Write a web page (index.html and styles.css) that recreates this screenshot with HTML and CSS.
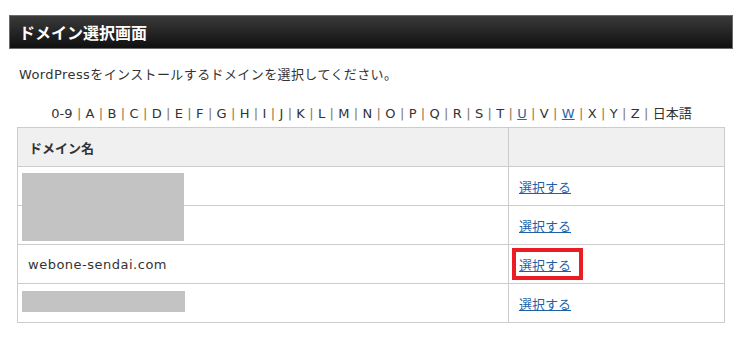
FILE: index.html
```html
<!DOCTYPE html>
<html lang="ja">
<head>
<meta charset="utf-8">
<title>ドメイン選択画面</title>
<link rel="stylesheet" href="styles.css">
</head>
<body>
<div class="page">
  <h1 class="title">ドメイン選択画面</h1>
  <p class="lead">WordPressをインストールするドメインを選択してください。</p>
  <p class="alpha">0-9 <span class="sep">|</span> A <span class="sep">|</span> B <span class="sep">|</span> C <span class="sep">|</span> D <span class="sep">|</span> E <span class="sep">|</span> F <span class="sep">|</span> G <span class="sep">|</span> H <span class="sep">|</span> I <span class="sep">|</span> J <span class="sep">|</span> K <span class="sep">|</span> L <span class="sep">|</span> M <span class="sep">|</span> N <span class="sep">|</span> O <span class="sep">|</span> P <span class="sep">|</span> Q <span class="sep">|</span> R <span class="sep">|</span> S <span class="sep">|</span> T <span class="sep">|</span> <a href="#">U</a> <span class="sep">|</span> V <span class="sep">|</span> <a href="#">W</a> <span class="sep">|</span> X <span class="sep">|</span> Y <span class="sep">|</span> Z <span class="sep">|</span> 日本語</p>
  <table class="domains">
    <thead>
      <tr><th class="name">ドメイン名</th><th class="act"></th></tr>
    </thead>
    <tbody>
      <tr><td class="name"><span class="mask mask-tall"></span></td><td class="act"><a href="#">選択する</a></td></tr>
      <tr><td class="name"></td><td class="act"><a href="#">選択する</a></td></tr>
      <tr><td class="name host">webone-sendai.com</td><td class="act"><span class="redbox"></span><a href="#">選択する</a></td></tr>
      <tr><td class="name"><span class="mask mask-short"></span></td><td class="act"><a href="#">選択する</a></td></tr>
    </tbody>
  </table>
</div>
</body>
</html>
```

FILE: styles.css
```css
html, body {
  margin: 0;
  padding: 0;
  background: #fff;
}
body {
  font-family: "DejaVu Sans", "Noto Sans CJK JP", sans-serif;
  color: #333;
  font-size: 13px;
}
.page {
  padding: 15px 6px 0 9px;
}
.title {
  margin: 0;
  height: 32px;
  border: 1px solid #6a6a6a;
  background: linear-gradient(#3a3a3a, #101010);
  color: #fff;
  font-family: "Noto Sans CJK JP", sans-serif;
  font-weight: bold;
  font-size: 16px;
  line-height: 32px;
  padding-left: 9px;
}
.lead {
  margin: 16px 0 0 10px;
  line-height: 20px;
  font-size: 13px;
  letter-spacing: 0.4px;
}
.alpha {
  margin: 19px 0 0;
  text-align: center;
  line-height: 20px;
  font-size: 13px;
  word-spacing: 0.2px;
  padding-left: 1px;
}
.alpha .sep {
  color: #8a7a5a;
}
.alpha a {
  color: #2a64a8;
}
.domains {
  margin: 3px 0 0 8px;
  width: 708px;
  border-collapse: collapse;
  font-size: 13px;
}
.domains th, .domains td {
  border: 1px solid #cccccc;
  height: 38px;
  padding: 0;
  text-align: left;
  vertical-align: middle;
  position: relative;
}
.domains th {
  background: #f0f0f0;
  font-family: "Noto Sans CJK JP", sans-serif;
  font-weight: bold;
  font-size: 13px;
  color: #333;
}
.domains th.name {
  width: 479px;
  padding-left: 11px;
}
.domains td.name {
  width: 480px;
  padding-left: 10px;
}
.domains .act {
  padding-left: 10px;
}
.domains .host {
  letter-spacing: 0.5px;
}
.domains a {
  color: #1f5fa8;
  font-family: "Noto Sans CJK JP", sans-serif;
  font-size: 13px;
  text-decoration: underline;
}
.mask {
  position: absolute;
  left: 4px;
  background: #c3c3c3;
  z-index: 1;
}
.mask-tall {
  top: 6px;
  width: 162px;
  height: 68px;
}
.mask-short {
  top: 7px;
  width: 163px;
  height: 21px;
}
.redbox {
  position: absolute;
  left: 3px;
  top: 3px;
  width: 71px;
  height: 32px;
  box-sizing: border-box;
  border: 4px solid #ec1c24;
}
```
